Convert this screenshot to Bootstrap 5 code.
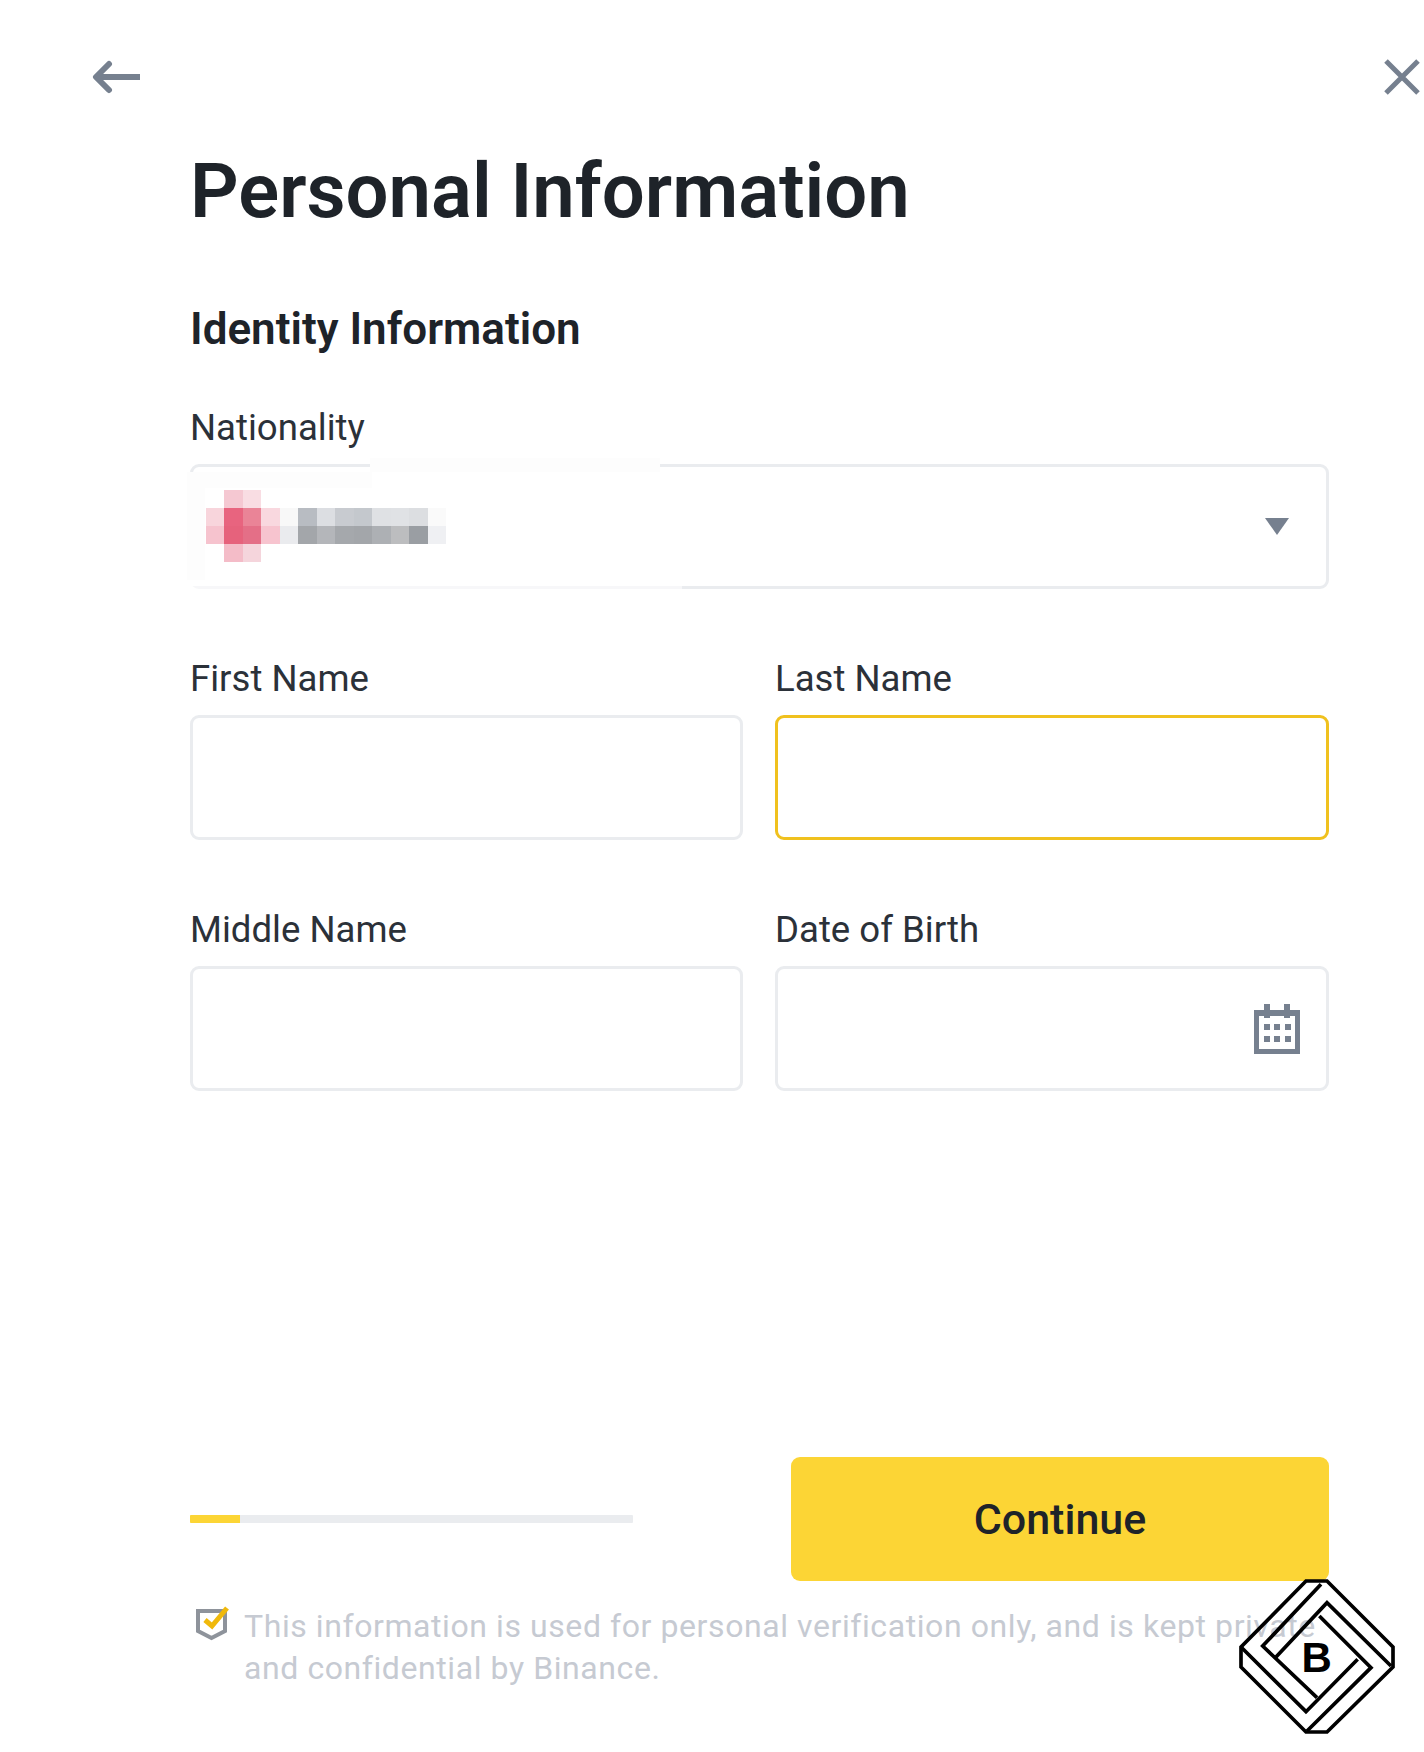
<!DOCTYPE html>
<html lang="en">
<head>
<meta charset="utf-8">
<title>Personal Information</title>
<link href="https://cdn.jsdelivr.net/npm/bootstrap@5.3.0/dist/css/bootstrap.min.css" rel="stylesheet">
<style>
html,body{margin:0;background:#fff}
body{font-family:Roboto,"Noto Sans",sans-serif;color:#1e2329;width:1424px;height:1752px;overflow:hidden}
.sheet{position:relative;width:1424px;height:1752px}
.topbar{height:120px;padding:59px 4px 0 92px}
.kyc-body{padding:0 95px 0 190px}
.kyc-title{font-size:76px;font-weight:600;line-height:80px;margin:31px 0 0;color:#1e2329}
.kyc-section{font-size:44px;font-weight:600;line-height:50px;margin:73px 0 0}
.kyc-label{display:block;font-size:36.6px;line-height:44px;color:#2b3139;margin:0 0 14px}
.nat-wrap{margin-top:52px}
.fields{display:grid;grid-template-columns:553px 554px;column-gap:32px;row-gap:68px;margin-top:68px}
.kyc-input{height:125px;border:3px solid #eaecef;border-radius:9px;background:#fff;position:relative;display:flex;align-items:center;justify-content:flex-end;padding-right:25px}
.kyc-input.is-active{border-color:#f0c11e}
.nat-input{padding-right:37px}
.blur-patch{position:absolute;left:-6px;top:-11px;filter:blur(.7px)}
.foot-row{display:flex;align-items:center;justify-content:space-between;margin-top:366px}
.prog-track{width:443px;height:8px;background:#eaecef;border-radius:1px;overflow:hidden}
.prog-fill{width:50px;height:8px;background:#fcd535}
.cont-btn{width:538px;height:124px;background:#fcd535;border:0;border-radius:9px;color:#1e2329;font-size:43px;font-weight:500;padding:0}
.cont-btn:hover{background:#fcd535;color:#1e2329}
.note-row{display:flex;gap:14px;margin-top:24px;padding-left:6px}
.note-text{font-size:32px;line-height:42px;letter-spacing:.58px;color:#c6cad2;margin:0;width:1130px}
.stamp{position:absolute;left:1201px;top:1551px}
</style>
</head>
<body>
<div class="sheet">
  <div class="topbar d-flex justify-content-between align-items-start">
    <svg width="50" height="36" viewBox="0 0 50 36" fill="none" stroke="#76808f" stroke-width="6"><path d="M48 18H5"/><path d="M17 5L4 18l13 13" stroke-linecap="round" stroke-linejoin="round"/></svg>
    <svg width="36" height="36" viewBox="0 0 36 36" fill="none" stroke="#76808f" stroke-width="5"><path d="M2 2l32 32M34 2L2 34"/></svg>
  </div>
  <div class="kyc-body">
    <h1 class="kyc-title">Personal Information</h1>
    <h2 class="kyc-section">Identity Information</h2>
    <div class="nat-wrap">
      <label class="kyc-label">Nationality</label>
      <div class="kyc-input nat-input">
        <svg class="blur-patch" width="500" height="137" viewBox="187 454 500 137" shape-rendering="crispEdges">
          <path fill="#fff" d="M187 470h183v-14h290v16h22v112H187z"/>
          <rect x="187" y="584" width="495" height="7" fill="#fff" fill-opacity=".6"/>
          <g fill="#fdfdfd"><rect x="187" y="470" width="185" height="16"/><rect x="370" y="456" width="290" height="14"/><rect x="187" y="486" width="18" height="92"/></g>
          <rect x="224" y="488" width="19" height="18" fill="#f5c8d2"/><rect x="243" y="488" width="18" height="18" fill="#f9dde3"/>
          <rect x="206" y="506" width="18" height="18" fill="#f8d5dc"/><rect x="224" y="506" width="19" height="18" fill="#e8647f"/><rect x="243" y="506" width="18" height="18" fill="#ea8497"/><rect x="261" y="506" width="19" height="18" fill="#f9d8df"/><rect x="280" y="506" width="18" height="18" fill="#f8f8f8"/><rect x="298" y="506" width="19" height="18" fill="#b8bcc2"/><rect x="317" y="506" width="18" height="18" fill="#dcdee2"/><rect x="335" y="506" width="19" height="18" fill="#c8cbd0"/><rect x="354" y="506" width="18" height="18" fill="#c4c8cd"/><rect x="372" y="506" width="19" height="18" fill="#dfe1e4"/><rect x="391" y="506" width="18" height="18" fill="#e0e2e5"/><rect x="409" y="506" width="19" height="18" fill="#dcdee1"/><rect x="428" y="506" width="18" height="18" fill="#fafafa"/>
          <rect x="206" y="524" width="18" height="18" fill="#f6c3ce"/><rect x="224" y="524" width="19" height="18" fill="#e6627c"/><rect x="243" y="524" width="18" height="18" fill="#e46f87"/><rect x="261" y="524" width="19" height="18" fill="#f7c4cf"/><rect x="280" y="524" width="18" height="18" fill="#eaebee"/><rect x="298" y="524" width="19" height="18" fill="#a3a6aa"/><rect x="317" y="524" width="18" height="18" fill="#b4b6ba"/><rect x="335" y="524" width="19" height="18" fill="#a5a8ac"/><rect x="354" y="524" width="18" height="18" fill="#a3a6aa"/><rect x="372" y="524" width="19" height="18" fill="#adb0b4"/><rect x="391" y="524" width="18" height="18" fill="#bcbdbf"/><rect x="409" y="524" width="19" height="18" fill="#9a9ea3"/><rect x="428" y="524" width="18" height="18" fill="#eff0f3"/>
          <rect x="224" y="542" width="19" height="18" fill="#f4bcc8"/><rect x="243" y="542" width="18" height="18" fill="#f5d5dc"/>
        </svg>
        <svg width="24" height="17" viewBox="0 0 24 17"><path fill="#76808f" d="M0 0h24L12 17z"/></svg>
      </div>
    </div>
    <div class="fields">
      <div><label class="kyc-label">First Name</label><div class="kyc-input"></div></div>
      <div><label class="kyc-label">Last Name</label><div class="kyc-input is-active"></div></div>
      <div><label class="kyc-label">Middle Name</label><div class="kyc-input"></div></div>
      <div><label class="kyc-label">Date of Birth</label><div class="kyc-input">
        <svg width="48" height="50" viewBox="0 0 48 50" fill="#76808f"><path fill-rule="evenodd" d="M1 6h10V0h6v6h14V0h6v6h10v44H1zM6 12v33h36V12z"/><path d="M11 6h6v8h-6zM31 6h6v8h-6z"/><rect x="11" y="20" width="6" height="6"/><rect x="21" y="20" width="6" height="6"/><rect x="32" y="20" width="6" height="6"/><rect x="11" y="32" width="6" height="6"/><rect x="21" y="32" width="6" height="6"/><rect x="32" y="32" width="6" height="6"/></svg>
      </div></div>
    </div>
    <div class="foot-row">
      <div class="prog-track"><div class="prog-fill"></div></div>
      <button type="button" class="btn cont-btn">Continue</button>
    </div>
    <div class="note-row">
      <svg class="flex-shrink-0" width="34" height="36" viewBox="0 0 34 36" fill="none"><path d="M2 6h27v20l-13.500 7L2 26z" stroke="#8e939b" stroke-width="4" fill="none"/><path d="M9 15l7 6L31 3" stroke="#f0b90b" stroke-width="5"/></svg>
      <p class="note-text">This information is used for personal verification only, and is kept private and confidential by Binance.</p>
    </div>
  </div>
  <svg class="stamp" width="224" height="202" viewBox="0 0 672 606" fill="none" stroke="#000" stroke-width="11" stroke-linejoin="miter">
    <path d="M315 90H378L576 288V348L378 543H315L120 348V288Z"/>
    <path d="M120 288L315 482L470 325"/>
    <path d="M360 100L185 285L348 440"/>
    <path d="M225 318L378 155L570 345"/>
    <path d="M355 195L510 350L318 540"/>
    <text x="347" y="362" text-anchor="middle" font-family="Liberation Sans" font-weight="700" font-size="126" fill="#000" stroke="none">B</text>
  </svg>
</div>
<script src="https://cdn.jsdelivr.net/npm/bootstrap@5.3.0/dist/js/bootstrap.bundle.min.js"></script>
</body>
</html>
